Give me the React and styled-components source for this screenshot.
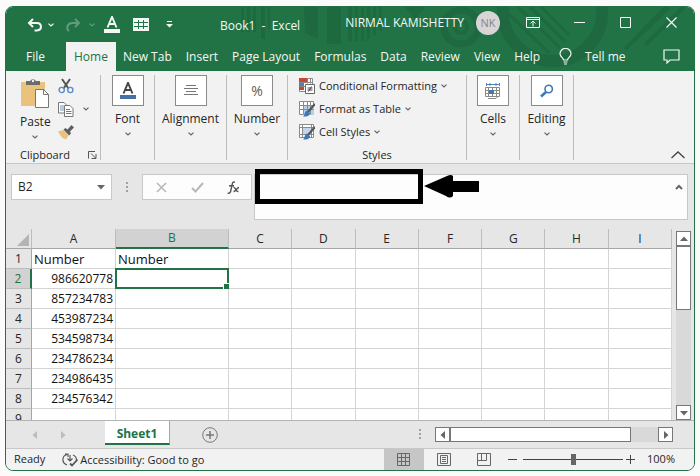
/**
 * Spreadsheet window
 *
 * Title bar, ribbon, formula bar, cell grid, sheet tabs and status bar
 */

import styled, { createGlobalStyle, ThemeProvider } from 'styled-components';

const theme = {
  green: '#217346',
  ribbon: '#f2f2f2',
  surface: '#e6e6e6',
  active: '#d2d2d2',
  border: '#c8c8c8',
  line: '#d4d4d4',
  control: '#777777',
  text: '#262626',
};

const GlobalStyle = createGlobalStyle`
  * {
    box-sizing: border-box;
  }

  body {
    margin: 0;
    background: #fbfbfb;
    font-family: 'Open Sans', 'Noto Sans', sans-serif;
    font-size: 12px;
    line-height: 16px;
    color: ${theme.text};
  }

  button, input, textarea {
    margin: 0;
    padding: 0;
    border: 0;
    border-radius: 0;
    background: none;
    color: inherit;
    font: inherit;
    outline: none;
  }

  svg {
    display: block;
    flex-shrink: 0;
  }
`;

const Page = styled.div`
  height: 100vh;
  padding: 6px 5px 5px;
`;

const Window = styled.main`
  display: flex;
  flex-direction: column;
  height: 100%;
  overflow: hidden;
  border: 1px solid ${({ theme }) => theme.green};
  border-radius: 8px;
  background: ${({ theme }) => theme.surface};
`;

/* Title bar and tabs */

const Header = styled.header`
  position: relative;
  background: ${({ theme }) => theme.green};
  color: #f4f8f5;
`;

const Backdrop = styled.svg`
  position: absolute;
  top: 0;
  right: 0;
`;

const TitleBar = styled.div`
  position: relative;
  display: flex;
  height: 35px;
  padding-left: 20px;
`;

const QuickAccess = styled.div`
  display: flex;
  align-items: center;
  width: 194px;
`;

const IconButton = styled.button`
  display: flex;
  align-items: center;
  justify-content: center;
  width: ${({ $width }) => $width || 16}px;
  opacity: ${({ disabled }) => (disabled ? 0.3 : 1)};
`;

const Title = styled.h1`
  flex: 1;
  margin: 0;
  font-size: 12px;
  font-weight: 400;
  line-height: 38px;
  white-space: pre;
`;

const Account = styled.div`
  display: flex;
  align-items: center;
  gap: 12px;
  height: 31px;
  white-space: nowrap;
`;

const Avatar = styled.span`
  width: 24px;
  border-radius: 50%;
  background: #d9d5d7;
  color: #858585;
  font-size: 11px;
  line-height: 24px;
  text-align: center;
`;

const WindowButtons = styled.div`
  display: flex;
  align-items: center;
  height: 31px;
  padding-left: 10px;
`;

const Tabs = styled.nav`
  position: relative;
  display: flex;
  height: 29px;
`;

const TAB_PADDING = {
  file: '0 21px 0 20px',
  home: '0 8px',
  tell: '0 12px',
};

const Tab = styled.button`
  display: flex;
  align-items: center;
  gap: 13px;
  padding: ${({ $kind }) => TAB_PADDING[$kind] || '0 7px'};
  background: ${({ $kind, theme }) => ($kind === 'home' ? theme.ribbon : 'transparent')};
  color: ${({ $kind, theme }) => ($kind === 'home' ? theme.green : 'inherit')};
  white-space: nowrap;
`;

const Comments = styled(IconButton)`
  margin: 0 15px 0 auto;
`;

/* Ribbon */

const Ribbon = styled.section`
  display: flex;
  height: 93px;
  padding-top: 4px;
  border-bottom: 1px solid ${({ theme }) => theme.border};
  background: ${({ theme }) => theme.ribbon};
`;

const Group = styled.div`
  display: flex;
  flex-direction: column;
  justify-content: space-between;
  width: ${({ $width }) => $width}px;
  height: 85px;
  border-right: 1px solid #bdbdbd;
`;

const GroupLabel = styled.div`
  display: flex;
  align-items: center;
  justify-content: ${({ $split }) => ($split ? 'space-between' : 'center')};
  padding: ${({ $split }) => ($split ? '0 3px 0 14px' : '0')};
  font-size: 11px;
  line-height: 10px;
`;

const BigButton = styled.button`
  display: flex;
  flex-direction: column;
  align-items: center;
  gap: 5px;
  white-space: nowrap;
`;

const IconFrame = styled.span`
  display: flex;
  align-items: center;
  justify-content: center;
  width: 32px;
  height: 31px;
  border: 1px solid #8a8a8a;
  background: #fff;
  color: #5c5c5c;
  font-size: 14px;
`;

const ClipboardTools = styled.div`
  display: flex;
  gap: 7px;
  padding: 3px 0 0 14px;
`;

const ToolColumn = styled.div`
  display: flex;
  flex-direction: column;
  gap: 7px;
`;

const ToolButton = styled.button`
  display: flex;
  align-items: center;
  gap: 9px;
  height: 16px;
`;

const StyleList = styled.div`
  display: flex;
  flex-direction: column;
  align-items: flex-start;
  gap: 7px;
  padding: 3px 0 0 11px;
  font-size: 11px;
`;

const StyleButton = styled(ToolButton)`
  gap: 4px;
  white-space: nowrap;
`;

const Collapse = styled(IconButton)`
  align-self: flex-end;
  margin: 0 8px 4px auto;
`;

/* Formula bar */

const FormulaBar = styled.section`
  display: flex;
  align-items: flex-start;
  height: 65px;
  padding: 10px 6px 0 5px;
`;

const NameBox = styled.div`
  display: flex;
  width: 101px;
  height: 26px;
  border: 1px solid ${({ theme }) => theme.border};
  background: #fff;

  input {
    flex: 1;
    min-width: 0;
    padding-left: 6px;
  }
`;

const DotsSlot = styled.div`
  display: flex;
  align-items: center;
  justify-content: center;
  width: 30px;
  height: 26px;
`;

const EntryButtons = styled.div`
  display: flex;
  justify-content: space-around;
  width: 110px;
  height: 26px;
  border: 1px solid ${({ theme }) => theme.border};
  background: #fdfdfd;
`;

const FormulaField = styled.div`
  position: relative;
  display: flex;
  flex: 1;
  height: 46px;
  margin-left: 2px;
  border: 1px solid ${({ theme }) => theme.border};
  background: #fdfdfd;

  textarea {
    flex: 1;
    min-width: 0;
    padding: 4px 8px;
    resize: none;
  }
`;

const ExpandButton = styled(IconButton)`
  height: 23px;
`;

const Callout = styled.div`
  position: absolute;
  top: -6px;
  left: 0;
  display: flex;
  align-items: center;
  gap: 1px;
  pointer-events: none;
`;

const CalloutBox = styled.div`
  width: 168px;
  height: 35px;
  border: 5px solid #000;
`;

/* Grid */

const GridArea = styled.section`
  display: flex;
  flex: 1;
  min-height: 0;
  overflow: hidden;
  border-bottom: 1px solid #b4b4b4;
`;

const GridViewport = styled.div`
  flex: 1;
  overflow: hidden;
`;

const Sheet = styled.table`
  width: 100%;
  table-layout: fixed;
  border-collapse: separate;
  border-spacing: 0;
`;

const Col = styled.col`
  width: ${({ $width }) => ($width ? `${$width}px` : 'auto')};
`;

const ColumnHead = styled.th`
  height: 20px;
  padding: 0;
  border-right: 1px solid #bdbdbd;
  border-bottom: ${({ $active, theme }) => ($active ? `2px solid ${theme.green}` : '1px solid #a6a6a6')};
  background: ${({ $active, theme }) => ($active ? theme.active : theme.surface)};
  color: ${({ $active, theme }) => ($active ? theme.green : theme.text)};
  font-weight: 400;

  svg {
    margin: 2px 2px 0 auto;
  }
`;

const RowHead = styled.th`
  height: 20px;
  padding: 0;
  border-right: ${({ $active, theme }) => ($active ? `2px solid ${theme.green}` : '1px solid #a6a6a6')};
  border-bottom: 1px solid #bdbdbd;
  background: ${({ $active, theme }) => ($active ? theme.active : theme.surface)};
  color: ${({ $active, theme }) => ($active ? theme.green : theme.text)};
  font-weight: 400;
`;

const Cell = styled.td`
  position: relative;
  height: 20px;
  padding: 0 2px;
  border-right: 1px solid ${({ theme }) => theme.line};
  border-bottom: 1px solid ${({ theme }) => theme.line};
  background: #fff;
  color: #111;
  font-size: ${({ $numeric }) => ($numeric ? 12 : 13)}px;
  text-align: ${({ $numeric }) => ($numeric ? 'right' : 'left')};
`;

const Selection = styled.span`
  position: absolute;
  inset: -1px;
  border: 2px solid ${({ theme }) => theme.green};

  &::after {
    content: '';
    position: absolute;
    right: -3px;
    bottom: -3px;
    width: 6px;
    height: 6px;
    border: 1px solid #fff;
    border-width: 1px 0 0 1px;
    background: ${({ theme }) => theme.green};
  }
`;

const ScrollBar = styled.div`
  display: flex;
  flex-direction: ${({ $vertical }) => ($vertical ? 'column' : 'row')};
  background: #d9d9d9;
  ${({ $vertical }) => ($vertical ? 'width: 15px; margin: 2px 3px 0 4px;' : 'width: 238px; height: 15px;')}
`;

const ScrollButton = styled.button`
  display: flex;
  align-items: center;
  justify-content: center;
  width: 15px;
  height: 15px;
  border: 1px solid ${({ theme }) => theme.control};
  background: #fff;
`;

const ScrollThumb = styled.div`
  flex: 0 0 ${({ $size }) => $size};
  border: 1px solid ${({ theme }) => theme.control};
  background: #fff;
`;

const Spacer = styled.div`
  flex: 1;
`;

/* Sheet tabs and status bar */

const SheetBar = styled.section`
  display: flex;
  align-items: center;
  height: 28px;
  padding-right: 21px;
  border-bottom: 1px solid ${({ theme }) => theme.border};
`;

const SheetNav = styled.div`
  display: flex;
  gap: 12px;
  width: 99px;
  padding-left: 21px;
`;

const SheetTab = styled.button`
  align-self: flex-start;
  width: 65px;
  height: 24px;
  margin-right: 32px;
  padding-top: 3px;
  border-right: 1px solid #a6a6a6;
  border-bottom: 2px solid ${({ theme }) => theme.green};
  background: #fff;
  color: ${({ theme }) => theme.green};
  font-weight: 700;
`;

const StatusBar = styled.footer`
  display: flex;
  height: 21px;
  padding: 0 19px 0 8px;
  background: ${({ theme }) => theme.ribbon};
  font-size: 11px;
  line-height: 20px;
  white-space: nowrap;
`;

const Access = styled.button`
  display: flex;
  align-items: center;
  gap: 2px;
  margin-left: 17px;
`;

const ViewButton = styled.button`
  display: flex;
  align-items: center;
  justify-content: center;
  width: 40px;
  background: ${({ $active }) => ($active ? '#c6c6c6' : 'transparent')};
`;

const ZoomSlider = styled.input`
  width: 100px;
  margin: 0 3px;
  appearance: none;

  &::-webkit-slider-runnable-track {
    height: 1px;
    background: #444;
  }

  &::-webkit-slider-thumb {
    width: 5px;
    height: 11px;
    margin-top: -5px;
    appearance: none;
    background: #666;
  }
`;

const ZoomValue = styled.span`
  width: 40px;
  text-align: right;
`;

const Chevron = ({ color = '#666' }) => (
  <svg width="6" height="4" viewBox="0 0 6 4" fill="none" stroke={color} strokeWidth="1.2">
    <path d="M.5.6 3 3 5.5.6" />
  </svg>
);

const ARROWS = {
  up: 'M0 6 4 1.5 8 6z',
  down: 'M0 2 4 6.5 8 2z',
  left: 'M6 0 1.5 4 6 8z',
  right: 'M2 0 6.5 4 2 8z',
};

const Triangle = ({ dir, color = '#666' }) => (
  <svg width="8" height="8" viewBox="0 0 8 8" fill={color}>
    <path d={ARROWS[dir]} />
  </svg>
);

const Dots = () => (
  <svg width="2" height="11" fill="#a0a0a0">
    <path d="M0 0h2v2H0zM0 4h2v2H0zM0 8h2v2H0z" />
  </svg>
);

const HeaderArt = () => (
  <Backdrop width="454" height="64" viewBox="240 7 454 64" fill="none" stroke="#1e693f">
    <g fill="#1e693f" stroke="none">
      <path d="M241 7h3v25h-3zM247 7h3v25h-3zM253 7h3v25h-3zM261 7h4v32h-4zM268 7h2v22h-2z" />
      <path d="M304 7h14v32l-13-6zM327 7h14v37h-14zM348 7h4v34h-4zM355 7h3v34h-3zM361 7h3v34h-3zM367 7h3v32h-3zM373 7h3v29h-3zM379 7h3v24h-3z" />
      <path d="M405 7h20l-10 12z" />
    </g>
    <circle cx="461" cy="27" r="17" strokeWidth="7" />
    <circle cx="461" cy="27" r="6" strokeWidth="4" />
    <path d="M503 7a50 50 0 0 0 52 54 49 49 0 0 0 47-54" strokeWidth="12" />
    <path d="M508 13l41 40M518 7l42 41M530 7l35 34M541 7l28 28" strokeWidth="3" />
    <path d="M625 49l44-42M645 45l39-38M638 36l28-29" strokeWidth="4" />
  </Backdrop>
);

const UndoIcon = () => (
  <svg width="16" height="14" viewBox="0 0 16 14" fill="none" stroke="currentColor" strokeWidth="2">
    <path d="M6 1 2 5l4 4M2.500 5H10c5 0 5.500 7 0 7.500H7.500" />
  </svg>
);

const RedoIcon = () => (
  <svg width="16" height="14" viewBox="0 0 16 14" fill="none" stroke="currentColor" strokeWidth="2">
    <path d="M10 1l4 4-4 4M13.500 5H7c-5 0-6 6-3 8" />
  </svg>
);

const FontIcon = ({ bar, letter = 'currentColor' }) => (
  <svg width="16" height="17" viewBox="0 0 16 17">
    <path d="M3.500 11.500 8 .8l4.500 10.700M5 8h6" fill="none" stroke={letter} strokeWidth="1.900" />
    <path d="M0 13h16v4H0z" fill={bar} />
  </svg>
);

const TableIcon = () => (
  <svg width="16" height="13" viewBox="0 0 16 13">
    <path d="M0 0h16v13H0z" fill="currentColor" />
    <path d="M1 4.500h14M1 8.500h14M5.500 2v9M10.500 2v9" stroke="#217346" />
  </svg>
);

const CustomizeIcon = () => (
  <svg width="7" height="7" viewBox="0 0 7 7" fill="currentColor">
    <path d="M1 0h5v1H1zM0 3h7L3.500 6.500z" />
  </svg>
);

const RibbonModeIcon = () => (
  <svg width="14" height="11" viewBox="0 0 14 11" fill="none" stroke="currentColor">
    <path d="M.5.5h13v10H.5zM.5 2.500h13M7 9.500V4.500M4.500 6.500 7 4l2.500 2.500" />
  </svg>
);

const MinimizeIcon = () => (
  <svg width="11" height="11" stroke="currentColor"><path d="M0 5.500h11" /></svg>
);

const MaximizeIcon = () => (
  <svg width="11" height="11" fill="none" stroke="currentColor"><path d="M.5.5h10v10H.5z" /></svg>
);

const CloseIcon = () => (
  <svg width="11" height="11" stroke="currentColor" strokeWidth="1.200"><path d="M.5.5l10 10M10.500.5l-10 10" /></svg>
);

const BulbIcon = () => (
  <svg width="13" height="17" viewBox="0 0 13 17" fill="none" stroke="currentColor" strokeWidth="1.200">
    <path d="M4.500 12c0-2.500-3.500-3-3.500-6.300a5.400 5.200 0 0 1 11 0C12 9 8.500 9.500 8.500 12zM4.500 14h4M5 16h3" />
  </svg>
);

const CommentIcon = () => (
  <svg width="17" height="15" viewBox="0 0 17 15" fill="none" stroke="currentColor" strokeWidth="1.200">
    <path d="M1 1h15v10H7l-3 3v-3H1z" />
  </svg>
);

const PasteIcon = () => (
  <svg width="28" height="31" viewBox="0 0 28 31">
    <path d="M0 4h24v24H0z" fill="#e9c27c" />
    <path d="M5 3h4a3.500 3.500 0 0 1 6 0h4v4H5z" fill="#6b6b6b" />
    <circle cx="12" cy="3" r="1.200" fill="#f2f2f2" />
    <path d="M14.500 11.500h8l5 5v13h-13z" fill="#fff" stroke="#777" />
    <path d="M22.500 11.500v5h5" fill="none" stroke="#777" />
  </svg>
);

const CutIcon = () => (
  <svg width="16" height="16" viewBox="0 0 16 16" fill="none" strokeWidth="2">
    <path d="M4 1l6.500 9.500M12 1 5.500 10.500" stroke="#555" />
    <circle cx="3.700" cy="12" r="2.600" stroke="#5b8cc8" strokeWidth="1.400" />
    <circle cx="12.300" cy="12" r="2.600" stroke="#5b8cc8" strokeWidth="1.400" />
  </svg>
);

const CopyIcon = () => (
  <svg width="16" height="15" viewBox="0 0 16 15" fill="#fff" stroke="#777">
    <path d="M.5.5H6l2.500 2.500v8h-8z" />
    <path d="M2 4h4M2 6h4M2 8h4" stroke="#6f93bb" />
    <path d="M6.500 3.500H12l3 3v8H6.500z" />
    <path d="M8 7.500h4M8 9.500h5.500M8 11.500h5.500" stroke="#4f81b8" />
  </svg>
);

const BrushIcon = () => (
  <svg width="16" height="15" viewBox="0 0 16 15">
    <path d="M0 6.500 5.500 5l5 5.500L8 14.500C4.500 13.500 2 10.500 0 6.500z" fill="#e9c27c" />
    <path d="M5.500 4.500 7.500 3l2 1.500L13.500 0 16 2.500 12 6.500l1 2-2 2z" fill="#5e5e5e" />
  </svg>
);

const AlignIcon = () => (
  <svg width="14" height="11" viewBox="0 0 14 11" stroke="#777">
    <path d="M2 .5h10M0 3.500h14M2 6.500h10M0 9.500h14" />
  </svg>
);

const CellsIcon = () => (
  <svg width="16" height="17" viewBox="0 0 16 17" fill="none" stroke="#888">
    <path d="M1.500 1v3M14.500 1v3M2 2.500h12M5 1v3M11 1v3" stroke="#4f81b8" />
    <path d="M.5 5.500h14v9H.5zM3.500 5.500v9M7.500 5.500v9M11.500 5.500v9M.5 8.500h14M.5 11.500h14M3 16.500h8l2-2" />
    <path d="M4 8h5v4H4z" fill="#3f78b9" stroke="none" />
  </svg>
);

const FindIcon = () => (
  <svg width="14" height="14" viewBox="0 0 14 14" fill="none" stroke="#3f78b9">
    <circle cx="8.700" cy="5" r="3.700" strokeWidth="1.600" />
    <path d="M6 8 1 12.500" strokeWidth="2.600" />
  </svg>
);

const ConditionalIcon = () => (
  <svg width="16" height="16" viewBox="0 0 16 16" fill="none" stroke="#8a8a8a">
    <path d="M.5.5h13v13H.5z" fill="#fff" />
    <path d="M0 0h8v4H0zM0 8h5v4H0z" fill="#c6492f" stroke="none" />
    <path d="M0 4h5v4H0z" fill="#4f81b8" stroke="none" />
    <path d="M.5 4.500h13M.5 8.500h6M8.500.5v5M11.500.5v5" />
    <path d="M6.500 6.500h9v9h-9z" fill="#fff" stroke="#666" />
    <path d="M8.500 10h5M8.500 12h5M12.500 8.500l-3 5" stroke="#444" />
  </svg>
);

const SheetBrushIcon = ({ fill }) => (
  <svg width="16" height="16" viewBox="0 0 16 16" fill="none" stroke="#8a8a8a">
    <path d="M.5.5h14v13H.5z" fill="#fff" />
    {fill === 'table' ? (
      <>
        <path d="M4 4h11v10H4z" fill="#b5cfe9" stroke="none" />
        <path d="M.5 4.500h14M.5 8.500h14M4.500.5v13M8.500.5v13M11.500.5v13" />
      </>
    ) : (
      <>
        <path d="M4 4h8v6H4z" fill="#c3d6ea" stroke="none" />
        <path d="M.5 3.500h14M.5 10.500h14M3.500.5v13M12.500.5v13" />
      </>
    )}
    <path d="M16 3 9 11" stroke="#555" strokeWidth="2" />
    <path d="M8 9.500 11 12c0 3-4 4-7 3.500 2-1 1-5 4-6z" fill="#3f78b9" stroke="none" />
  </svg>
);

const LauncherIcon = () => (
  <svg width="9" height="8" viewBox="0 0 9 8" fill="none" stroke="#555">
    <path d="M.5 7.500v-7H7M3 2.500l4.500 4.500M8 3v4.500H3.500" />
  </svg>
);

const FxIcon = () => (
  <svg width="13" height="13" viewBox="0 0 13 13" fill="none" stroke="#555" strokeWidth="1.400">
    <path d="M8 1.200C5.500.2 5.300 2.500 4.800 5L3.700 10c-.4 2-1.400 2.800-3 2M2 4.700h5M6.500 6.500c2-1 2.500 5 5 4M12 6.500c-2 0-3.500 4.500-5.500 4" />
  </svg>
);

const CheckSyncIcon = () => (
  <svg width="16" height="14" viewBox="0 0 16 14" fill="none" stroke="#555" strokeWidth="1.200">
    <path d="M5 1.500C-.5 3-.5 10 5 12M3 1h3v3M8 2v6M5.500 5.500 8 8l2.500-2.500M11 2c2.500 1 3.500 3 3.500 5" />
    <path d="M8 10.500l2 2 5.500-6" strokeWidth="1.800" />
  </svg>
);

const PlusCircleIcon = () => (
  <svg width="16" height="16" viewBox="0 0 16 16" fill="none" stroke="#777">
    <circle cx="8" cy="8" r="7.300" />
    <path d="M8 4v8M4 8h8" strokeWidth="1.500" />
  </svg>
);

const ArrowMark = () => (
  <svg width="55" height="23" viewBox="0 0 55 23">
    <path d="M0 11 23 1q4-2 6 0v5h26v11H29v4q-3 3-7 0z" fill="#000" />
  </svg>
);

const VIEW_ICONS = [
  { label: 'Normal', path: 'M.5.5h12v12H.5zM.5 4.500h12M.5 8.500h12M4.500.5v12M8.500.5v12' },
  { label: 'Page layout', path: 'M.5.5h13v12H.5zM3.500 2.500h7v8h-7zM5 4.500h4M5 6.500h4M5 8.500h4' },
  { label: 'Page break preview', path: 'M.5.5h13v12H.5zM4.500.5v7M9.500.5v7M.5 7.500h9' },
];

const TABS = ['New Tab', 'Insert', 'Page Layout', 'Formulas', 'Data', 'Review', 'View', 'Help'];

const COLUMNS = ['A', 'B', 'C', 'D', 'E', 'F', 'G', 'H', 'I'];
const COLUMN_WIDTHS = { A: 84, B: 113 };

const ROWS = [
  ['Number', 'Number'],
  [986620778],
  [857234783],
  [453987234],
  [534598734],
  [234786234],
  [234986435],
  [234576342],
  [],
];

const STYLE_ITEMS = [
  { label: 'Conditional Formatting', icon: <ConditionalIcon /> },
  { label: 'Format as Table', icon: <SheetBrushIcon fill="table" /> },
  { label: 'Cell Styles', icon: <SheetBrushIcon fill="cell" /> },
];

const FramedGroup = ({ label, width, children }) => (
  <Group $width={width}>
    <BigButton>
      <IconFrame>{children}</IconFrame>
      {label}
      <Chevron />
    </BigButton>
  </Group>
);

const App = () => (
  <ThemeProvider theme={theme}>
    <GlobalStyle />
    <Page>
      <Window>
        <Header>
          <HeaderArt />
          <TitleBar>
            <QuickAccess>
              <IconButton $width={18} aria-label="Undo"><UndoIcon /></IconButton>
              <IconButton $width={14} aria-label="Undo list"><Chevron color="currentColor" /></IconButton>
              <IconButton $width={30} disabled aria-label="Redo"><RedoIcon /></IconButton>
              <IconButton $width={8} disabled aria-label="Redo list"><Chevron color="currentColor" /></IconButton>
              <IconButton $width={32} aria-label="Font color"><FontIcon bar="currentColor" /></IconButton>
              <IconButton $width={26} aria-label="Table"><TableIcon /></IconButton>
              <IconButton $width={30} aria-label="Customize"><CustomizeIcon /></IconButton>
            </QuickAccess>
            <Title>Book1  -  Excel</Title>
            <Account>
              NIRMAL KAMISHETTY
              <Avatar>NK</Avatar>
            </Account>
            <WindowButtons>
              <IconButton $width={46} aria-label="Ribbon display"><RibbonModeIcon /></IconButton>
              <IconButton $width={46} aria-label="Minimize"><MinimizeIcon /></IconButton>
              <IconButton $width={46} aria-label="Maximize"><MaximizeIcon /></IconButton>
              <IconButton $width={46} aria-label="Close"><CloseIcon /></IconButton>
            </WindowButtons>
          </TitleBar>
          <Tabs>
            <Tab $kind="file">File</Tab>
            <Tab $kind="home">Home</Tab>
            {TABS.map((name) => (
              <Tab key={name}>{name}</Tab>
            ))}
            <Tab $kind="tell"><BulbIcon />Tell me</Tab>
            <Comments aria-label="Comments"><CommentIcon /></Comments>
          </Tabs>
        </Header>

        <Ribbon>
          <Group $width={95}>
            <ClipboardTools>
              <BigButton><PasteIcon />Paste<Chevron /></BigButton>
              <ToolColumn>
                <ToolButton aria-label="Cut"><CutIcon /></ToolButton>
                <ToolButton aria-label="Copy"><CopyIcon /><Chevron /></ToolButton>
                <ToolButton aria-label="Format painter"><BrushIcon /></ToolButton>
              </ToolColumn>
            </ClipboardTools>
            <GroupLabel $split>
              Clipboard
              <IconButton $width={9} aria-label="Clipboard settings"><LauncherIcon /></IconButton>
            </GroupLabel>
          </Group>
          <FramedGroup label="Font" width={54}><FontIcon bar="#4472a8" letter="#444" /></FramedGroup>
          <FramedGroup label="Alignment" width={72}><AlignIcon /></FramedGroup>
          <FramedGroup label="Number" width={61}>%</FramedGroup>
          <Group $width={179}>
            <StyleList>
              {STYLE_ITEMS.map(({ label, icon }) => (
                <StyleButton key={label}>{icon}{label}<Chevron /></StyleButton>
              ))}
            </StyleList>
            <GroupLabel>Styles</GroupLabel>
          </Group>
          <FramedGroup label="Cells" width={53}><CellsIcon /></FramedGroup>
          <FramedGroup label="Editing" width={54}><FindIcon /></FramedGroup>
          <Collapse aria-label="Collapse ribbon">
            <svg width="14" height="8" fill="none" stroke="#444" strokeWidth="1.300"><path d="M.5 7 7 1l6.500 6" /></svg>
          </Collapse>
        </Ribbon>

        <FormulaBar>
          <NameBox>
            <input aria-label="Name box" defaultValue="B2" />
            <IconButton $width={20} aria-label="Names"><Triangle dir="down" /></IconButton>
          </NameBox>
          <DotsSlot><Dots /></DotsSlot>
          <EntryButtons>
            <IconButton aria-label="Cancel">
              <svg width="11" height="11" stroke="#b8b8b8" strokeWidth="1.600"><path d="M1 1l9 9M10 1l-9 9" /></svg>
            </IconButton>
            <IconButton aria-label="Enter">
              <svg width="13" height="11" fill="none" stroke="#b8b8b8" strokeWidth="2"><path d="M1 6l3.500 3.500L12 1" /></svg>
            </IconButton>
            <IconButton aria-label="Insert function"><FxIcon /></IconButton>
          </EntryButtons>
          <FormulaField>
            <textarea aria-label="Formula" />
            <ExpandButton aria-label="Collapse formula bar">
              <svg width="8" height="6" fill="none" stroke="#666" strokeWidth="2"><path d="M1 5l3-3 3 3" /></svg>
            </ExpandButton>
            <Callout>
              <CalloutBox />
              <ArrowMark />
            </Callout>
          </FormulaField>
        </FormulaBar>

        <GridArea>
          <GridViewport>
            <Sheet>
              <colgroup>
                <Col $width={26} />
                {COLUMNS.map((name) => (
                  <Col key={name} $width={COLUMN_WIDTHS[name]} />
                ))}
              </colgroup>
              <thead>
                <tr>
                  <ColumnHead aria-label="Select all">
                    <svg width="12" height="12" fill="#b4b4b4"><path d="M12 0v12H0z" /></svg>
                  </ColumnHead>
                  {COLUMNS.map((name) => (
                    <ColumnHead key={name} $active={name === 'B'}>{name}</ColumnHead>
                  ))}
                </tr>
              </thead>
              <tbody>
                {ROWS.map((row, r) => (
                  <tr key={r}>
                    <RowHead $active={r === 1}>{r + 1}</RowHead>
                    {COLUMNS.map((name, c) => (
                      <Cell key={name} $numeric={typeof row[c] === 'number'}>
                        {row[c]}
                        {r === 1 && name === 'B' && <Selection />}
                      </Cell>
                    ))}
                  </tr>
                ))}
              </tbody>
            </Sheet>
          </GridViewport>
          <ScrollBar $vertical>
            <ScrollButton aria-label="Scroll up"><Triangle dir="up" /></ScrollButton>
            <ScrollThumb $size="34%" />
            <Spacer />
            <ScrollButton aria-label="Scroll down"><Triangle dir="down" /></ScrollButton>
          </ScrollBar>
        </GridArea>

        <SheetBar>
          <SheetNav>
            <IconButton aria-label="Previous sheet"><Triangle dir="left" color="#bcbcbc" /></IconButton>
            <IconButton aria-label="Next sheet"><Triangle dir="right" color="#bcbcbc" /></IconButton>
          </SheetNav>
          <SheetTab>Sheet1</SheetTab>
          <IconButton aria-label="New sheet"><PlusCircleIcon /></IconButton>
          <Spacer />
          <DotsSlot><Dots /></DotsSlot>
          <ScrollBar>
            <ScrollButton aria-label="Scroll left"><Triangle dir="left" /></ScrollButton>
            <ScrollThumb $size="76%" />
            <Spacer />
            <ScrollButton aria-label="Scroll right"><Triangle dir="right" /></ScrollButton>
          </ScrollBar>
        </SheetBar>

        <StatusBar>
          Ready
          <Access><CheckSyncIcon />Accessibility: Good to go</Access>
          <Spacer />
          {VIEW_ICONS.map(({ label, path }, i) => (
            <ViewButton key={label} $active={i === 0} aria-label={label}>
              <svg width="14" height="13" fill="none" stroke="#666"><path d={path} /></svg>
            </ViewButton>
          ))}
          <IconButton aria-label="Zoom out">
            <svg width="9" height="9" stroke="#444"><path d="M0 4.500h9" /></svg>
          </IconButton>
          <ZoomSlider type="range" aria-label="Zoom" min="0" max="200" defaultValue="100" />
          <IconButton $width={9} aria-label="Zoom in">
            <svg width="9" height="9" stroke="#444"><path d="M0 4.500h9M4.500 0v9" /></svg>
          </IconButton>
          <ZoomValue>100%</ZoomValue>
        </StatusBar>
      </Window>
    </Page>
  </ThemeProvider>
);

export default App;
